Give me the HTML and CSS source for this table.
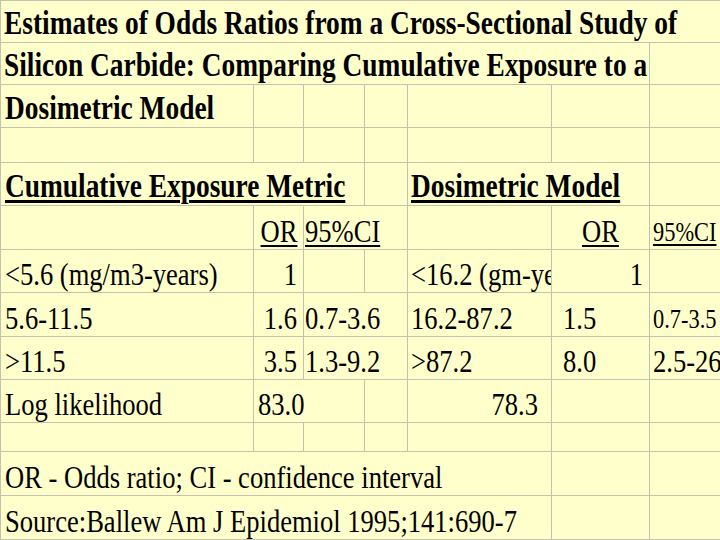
FILE: index.html
```
<!DOCTYPE html>
<html>
<head>
<meta charset="utf-8">
<link rel="stylesheet" href="styles.css">
</head>
<body>
<div class="sheet">
  <!-- row 1 -->
  <div class="c b span7 last"><span class="t">Estimates of Odds Ratios from a Cross-Sectional Study of</span></div>
  <!-- row 2 -->
  <div class="c b span6"><span class="t">Silicon Carbide: Comparing Cumulative Exposure to a</span></div>
  <div class="c last"></div>
  <!-- row 3 -->
  <div class="c b colA"><span class="t">Dosimetric Model</span></div>
  <div class="c"></div><div class="c"></div><div class="c"></div><div class="c"></div><div class="c"></div><div class="c last"></div>
  <!-- row 4 -->
  <div class="c"></div><div class="c"></div><div class="c"></div><div class="c"></div><div class="c"></div><div class="c"></div><div class="c last"></div>
  <!-- row 5 -->
  <div class="c b ub span3 colA"><span class="t">Cumulative Exposure Metric</span></div>
  <div class="c"></div>
  <div class="c b ub span2"><span class="t">Dosimetric Model</span></div>
  <div class="c last"></div>
  <!-- row 6 -->
  <div class="c"></div>
  <div class="c r u"><span class="t">OR</span></div>
  <div class="c u span2 colC"><span class="t">95%CI</span></div>
  <div class="c"></div>
  <div class="c u orF"><span class="t">OR</span></div>
  <div class="c u s last"><span class="t">95%CI</span></div>
  <!-- row 7 -->
  <div class="c colA"><span class="t">&lt;5.6 (mg/m3-years)</span></div>
  <div class="c r"><span class="t">1</span></div>
  <div class="c"></div>
  <div class="c"></div>
  <div class="c clip"><span class="t">&lt;16.2 (gm-years)</span></div>
  <div class="c r"><span class="t">1</span></div>
  <div class="c last"></div>
  <!-- row 8 -->
  <div class="c colA"><span class="t">5.6-11.5</span></div>
  <div class="c r"><span class="t">1.6</span></div>
  <div class="c span2 colC"><span class="t">0.7-3.6</span></div>
  <div class="c"><span class="t">16.2-87.2</span></div>
  <div class="c pF"><span class="t">1.5</span></div>
  <div class="c s last"><span class="t">0.7-3.5</span></div>
  <!-- row 9 -->
  <div class="c colA"><span class="t">&gt;11.5</span></div>
  <div class="c r"><span class="t">3.5</span></div>
  <div class="c span2 colC"><span class="t">1.3-9.2</span></div>
  <div class="c"><span class="t">&gt;87.2</span></div>
  <div class="c pF"><span class="t">8.0</span></div>
  <div class="c last"><span class="t">2.5-26</span></div>
  <!-- row 10 -->
  <div class="c colA"><span class="t">Log likelihood</span></div>
  <div class="c span2 colB"><span class="t">83.0</span></div>
  <div class="c"></div>
  <div class="c r rE"><span class="t">78.3</span></div>
  <div class="c"></div>
  <div class="c last"></div>
  <!-- row 11 -->
  <div class="c"></div><div class="c"></div><div class="c"></div><div class="c"></div><div class="c"></div><div class="c"></div><div class="c last"></div>
  <!-- row 12 -->
  <div class="c span5 colA"><span class="t">OR - Odds ratio; CI - confidence interval</span></div>
  <div class="c"></div>
  <div class="c last"></div>
  <!-- row 13 -->
  <div class="c span5 colA"><span class="t">Source:Ballew Am J Epidemiol 1995;141:690-7</span></div>
  <div class="c"></div>
  <div class="c last"></div>
</div>
</body>
</html>
```
FILE: styles.css
```
html, body {
  margin: 0;
  padding: 0;
}
body {
  background: #ffffcc;
  font-family: "Liberation Serif", "Times New Roman", serif;
  color: #000;
  overflow: hidden;
}
.sheet {
  display: grid;
  width: 720px;
  height: 540px;
  box-sizing: border-box;
  border-top: 1px solid #c4c2ae;
  border-left: 1px solid #c4c2ae;
  grid-template-columns: 253px 50px 61px 43px 144px 98px 70px;
  grid-template-rows: 42px 42px 43px 35px 43px 44px 43px 44px 43px 43px 29px 44px 44px;
  overflow: hidden;
  background: #ffffcc;
}
.c {
  min-width: 0;
  border-right: 1px solid #c4c2ae;
  border-bottom: 1px solid #c4c2ae;
  display: flex;
  align-items: flex-end;
  justify-content: flex-start;
  padding: 0 3px 2px 3px;
  font-size: 32px;
  line-height: 1;
  white-space: nowrap;
}
.last {
  border-right: none;
}
.t {
  display: inline-block;
  transform: scaleX(0.83);
  transform-origin: 0 100%;
}
.r {
  justify-content: flex-end;
  padding-right: 6px;
}
.r .t {
  transform-origin: 100% 100%;
}
.b {
  font-weight: bold;
  font-size: 33px;
}
.u .t {
  text-decoration: underline;
  text-decoration-thickness: 2px;
  text-underline-offset: 3px;
}
.ub .t {
  text-decoration: underline;
  text-decoration-thickness: 3px;
  text-underline-offset: 3px;
}
.s {
  font-size: 27px;
  padding-bottom: 3px;
}
.span2 { grid-column: span 2; }
.span3 { grid-column: span 3; }
.span5 { grid-column: span 5; }
.span6 { grid-column: span 6; }
.span7 { grid-column: span 7; }
.colA { padding-left: 4px; }
.colB { padding-left: 4px; }
.colC { padding-left: 1px; }
.orF { padding-left: 30px; }
.pF { padding-left: 11px; }
.rE { padding-right: 13px; }
.clip { overflow: hidden; }
```
